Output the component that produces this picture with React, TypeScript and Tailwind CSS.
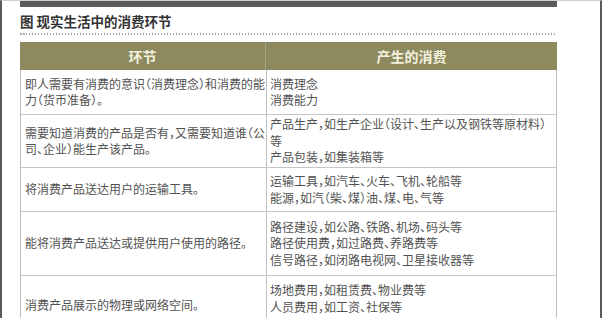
import React from "react";

const rows: { left: string[]; right: string[]; h: string }[] = [
  {
    left: ["即人需要有消费的意识（消费理念）和消费的能", "力（货币准备）。"],
    right: ["消费理念", "消费能力"],
    h: "h-[45px]",
  },
  {
    left: ["需要知道消费的产品是否有，又需要知道谁（公", "司、企业）能生产该产品。"],
    right: ["产品生产，如生产企业（设计、生产以及钢铁等原材料）", "等", "产品包装，如集装箱等"],
    h: "h-[53px]",
  },
  {
    left: ["将消费产品送达用户的运输工具。"],
    right: ["运输工具，如汽车、火车、飞机、轮船等", "能源，如汽（柴、煤）油、煤、电、气等"],
    h: "h-[44px]",
  },
  {
    left: ["能将消费产品送达或提供用户使用的路径。"],
    right: ["路径建设，如公路、铁路、机场、码头等", "路径使用费，如过路费、养路费等", "信号路径，如闭路电视网、卫星接收器等"],
    h: "h-[64px]",
  },
  {
    left: ["消费产品展示的物理或网络空间。"],
    right: ["场地费用，如租赁费、物业费等", "人员费用，如工资、社保等"],
    h: "h-[60px]",
  },
];

export default function App() {
  return (
    <div className="w-[602px] h-[318px] overflow-hidden bg-white border-l-2 border-r-2 border-l-[#5a5a5a] border-r-[#5a5a5a] border-t border-t-[#d0d0d0] font-['Noto_Sans_CJK_SC','Noto_Sans',sans-serif]">
      <div className="pl-[18px] flex flex-col">
        <div className="h-[6px] w-[537px] bg-[#5b5b5b]" />
        <div className="mt-[5px] h-[18px] leading-[18px] text-[13.5px] font-bold text-[#333333] whitespace-nowrap">
          图 现实生活中的消费环节
        </div>
        <div className="mt-[3px] h-[1.5px] w-[537px] bg-[repeating-linear-gradient(to_right,#a8a8a8_0_1.5px,transparent_1.5px_3px)]" />
        <div className="mt-[7.5px] w-[537px] h-[28px] bg-[#8c8a5e] grid grid-cols-[246px_291px] text-[14px] font-semibold text-[#f4f1df]">
          <div className="flex items-center justify-center border-r border-r-[#a6a47e]">环节</div>
          <div className="flex items-center justify-center">产生的消费</div>
        </div>
        <div className="w-[537px] border-x border-x-[#bcbcbc] text-[12px] leading-[16.5px] text-[#525252] [font-feature-settings:'halt']">
          {rows.map((r, i) => (
            <div key={i} className={`grid grid-cols-[246px_289px] border-b border-b-[#c6c6c6] ${r.h}`}>
              <div className="flex flex-col justify-center pl-[4px] border-r border-r-[#c0c0c0]">
                {r.left.map((t, j) => (
                  <div key={j} className="whitespace-nowrap">{t}</div>
                ))}
              </div>
              <div className={`flex flex-col pl-[3px] ${i === 4 ? "justify-start pt-[6px]" : "justify-center"}`}>
                {r.right.map((t, j) => (
                  <div key={j} className="whitespace-nowrap">{t}</div>
                ))}
              </div>
            </div>
          ))}
        </div>
      </div>
    </div>
  );
}
